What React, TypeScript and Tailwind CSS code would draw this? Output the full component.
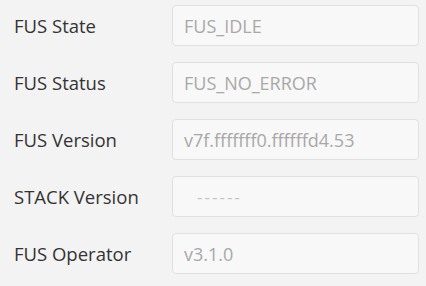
import React from "react";

const rows = [
  { label: "FUS State", value: "FUS_IDLE" },
  { label: "FUS Status", value: "FUS_NO_ERROR" },
  { label: "FUS Version", value: "v7f.fffffff0.ffffffd4.53" },
  { label: "STACK Version", value: "------", dash: true },
  { label: "FUS Operator", value: "v3.1.0" },
];

export default function App() {
  return (
    <div
      className="w-[426px] h-[286px] bg-[#f3f3f3] pt-[5px] pl-[14px] flex flex-col gap-[16px]"
      style={{ fontFamily: '"Open Sans", "Noto Sans", sans-serif' }}
    >
      {rows.map((r) => (
        <div key={r.label} className="flex items-center h-[41px]">
          <div className="w-[158px] text-[18.5px] text-[#333333] leading-none pt-[1px]">{r.label}</div>
          <div className="w-[247px] h-[41px] flex items-center rounded-[4px] border border-[#e0e0e0] bg-[#f8f8f8] pl-[11px] pt-[1px]">
            <span className={r.dash ? "text-[17px] text-[#c4c4c4] pl-[13px] tracking-[2px]" : "text-[18px] text-[#a8a8a8]"}>
              {r.value}
            </span>
          </div>
        </div>
      ))}
    </div>
  );
}
